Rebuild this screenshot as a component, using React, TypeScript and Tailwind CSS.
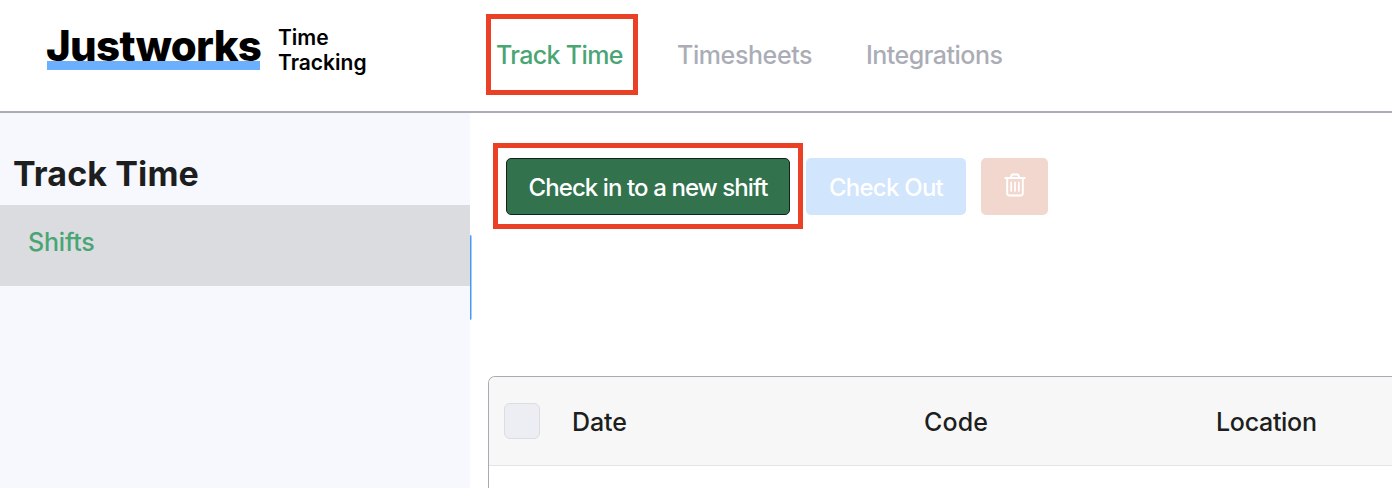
import React from "react";

const columns = [
  { label: "Date", className: "w-[352px] tracking-[-0.1px]" },
  { label: "Code", className: "w-[292px] tracking-[0.1px]" },
  { label: "Location", className: "tracking-[-0.3px]" },
];

const Logo = () => (
  <div className="flex w-[486px] shrink-0 pl-[46px]">
    <div className="relative w-[232px] pt-[19px]">
      <div className="absolute left-px top-[61px] h-[9px] w-[213px] bg-[#6caffc]" />
      <span className="relative block text-[42px] leading-[54px] font-extrabold tracking-[-0.7px] text-black">
        Justworks
      </span>
    </div>
    <div className="pt-[25px] text-[21px] leading-[25px] font-semibold text-black">
      <div>Time</div>
      <div>Tracking</div>
    </div>
  </div>
);

const TrashIcon = () => (
  <svg
    className="mb-[3px]"
    width="22"
    height="24"
    viewBox="0 0 22 24"
    fill="none"
    stroke="currentColor"
    strokeWidth="1.9"
    strokeLinecap="round"
    strokeLinejoin="round"
  >
    <path d="M1.3 5h19.4M6.5 4.8 8 1.5h6l1.5 3.3" />
    <path d="M3.2 5v15.3a2.2 2.2 0 0 0 2.2 2.2h11.2a2.2 2.2 0 0 0 2.2-2.2V5" />
    <path d="M7.2 9.3v8.6M11 9.3v8.6M14.8 9.3v8.6" strokeWidth="1.7" />
  </svg>
);

const Header = () => (
  <header className="flex h-[113px] border-b-2 border-[#abacb5] bg-white">
    <Logo />
    <nav className="flex pt-[14px] text-[25px] font-medium text-[#abadb6]">
      <a className="flex h-[81px] w-[152px] items-center border-[5px] border-[#ea4025] pt-[3px] pl-[5px] whitespace-nowrap text-[#4aa574] tracking-[-0.65px]">
        Track Time
      </a>
      <a className="ml-[39px] flex h-[81px] w-[189px] items-center pt-[3px] tracking-[-0.4px]">
        Timesheets
      </a>
      <a className="flex h-[81px] items-center pt-[3px] tracking-[-0.5px]">
        Integrations
      </a>
    </nav>
  </header>
);

const Sidebar = () => (
  <aside className="w-[470px] shrink-0 bg-[#f7f8fd]">
    <h1 className="h-[92px] pt-[38px] pl-[13px] text-[34px] leading-[46px] font-bold tracking-[0.1px] text-[#1d1e20]">
      Track Time
    </h1>
    <div className="h-[81px] bg-[#dbdce0] pt-[19px] pl-7 text-[25px] leading-[36px] font-medium tracking-[-0.2px] text-[#4aa574]">
      Shifts
    </div>
  </aside>
);

const App = () => {
  return (
    <div className="flex h-[488px] w-[1392px] flex-col overflow-hidden bg-white font-['Inter',sans-serif]">
      <Header />
      <div className="flex min-h-0 flex-1">
        <Sidebar />
        <div className="mt-[122px] h-[85px] w-[2px] shrink-0 rounded-r-[2px] border-r border-[#a4cdfd] bg-[#4597fa]" />
        <main className="flex min-w-0 flex-1 flex-col pl-4">
          <div className="flex h-[263px] pt-[30px] text-[24px] font-medium text-white">
            <div className="ml-[5px] h-[86px] w-[310px] border-[5px] border-[#ea4025] pt-[10px] pl-2">
              <button className="h-[57px] w-[284px] rounded-[5px] border border-[#10261a] bg-[#32734e] pt-[2px] whitespace-nowrap tracking-[-0.9px]">
                Check in to a new shift
              </button>
            </div>
            <button className="mt-[15px] ml-[3px] h-[57px] w-[160px] rounded-[5px] bg-[#d1e5fd] pt-[2px] whitespace-nowrap tracking-[-0.75px]">
              Check Out
            </button>
            <button className="mt-[15px] ml-[15px] flex h-[57px] w-[67px] items-center justify-center rounded-[5px] bg-[#f2d7ce]">
              <TrashIcon />
            </button>
          </div>
          <div className="flex-1 rounded-tl-[7px] border-t border-l border-[#a9abb3]">
            <div className="flex h-[89px] items-center rounded-tl-[6px] border-b border-[#e3e4e6] bg-[#f7f7f7] pl-[15px] text-[25px] font-medium text-[#1d1e20]">
              <div className="mr-8 h-9 w-9 rounded-[6px] border border-[#dcdde1] bg-[#edeef3]" />
              <div className="flex pt-[3px]">
                {columns.map((col) => (
                  <div key={col.label} className={col.className}>
                    {col.label}
                  </div>
                ))}
              </div>
            </div>
          </div>
        </main>
      </div>
    </div>
  );
};

export default App;
